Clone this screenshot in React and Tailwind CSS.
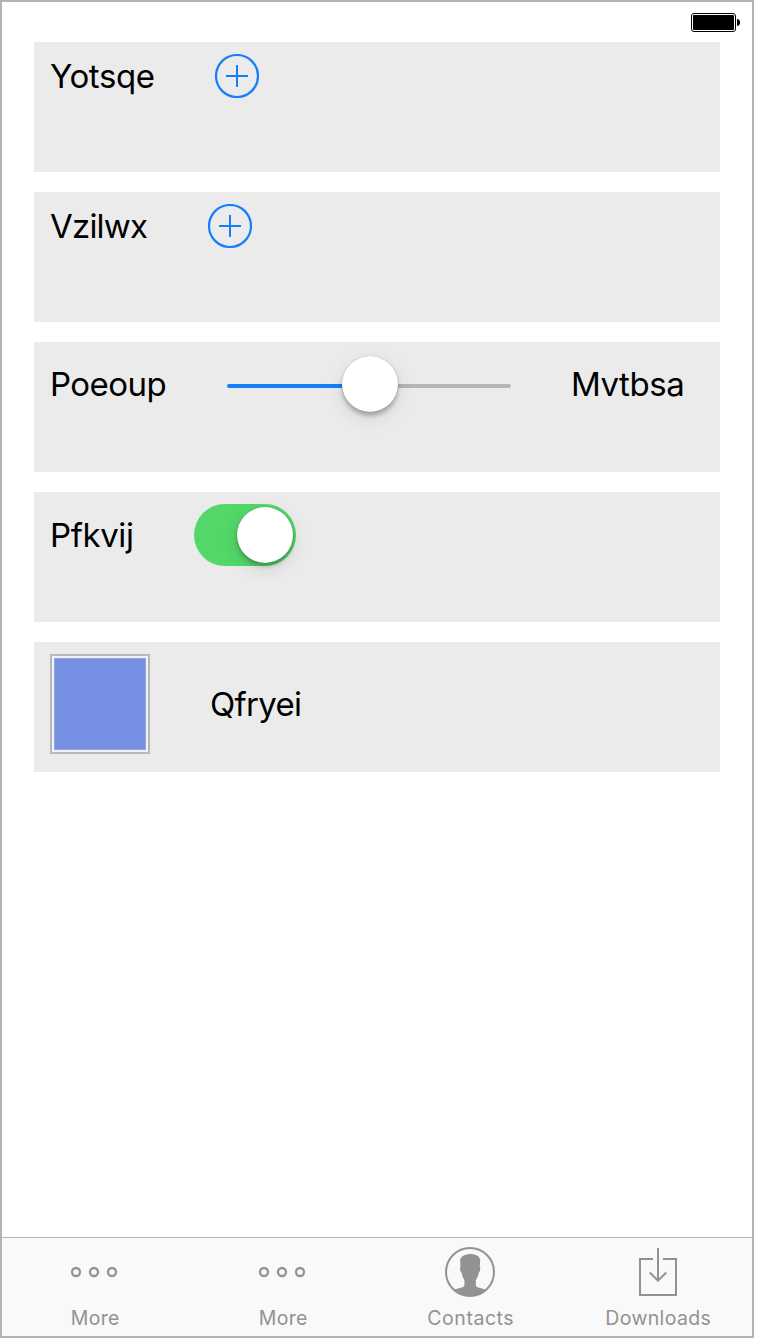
import React from "react";

function Label({ children, className = "" }) {
  return (
    <span className={"block shrink-0 whitespace-nowrap text-[33px] leading-[44px] text-black " + className}>
      {children}
    </span>
  );
}

function Card({ children, row }) {
  return (
    <section className="h-[130px] bg-[#ebebeb] pt-3 pl-4">
      <div className={"flex items-center gap-[60px] " + row}>{children}</div>
    </section>
  );
}

function AddButton() {
  return (
    <button type="button" className="block size-11 shrink-0">
      <svg width="44" height="44" viewBox="0 0 44 44" fill="none" stroke="#147efb" strokeWidth="2">
        <circle cx="22" cy="22" r="21" strokeWidth="2.2" />
        <path d="M22 11V33M11 22H33" />
      </svg>
    </button>
  );
}

function Slider() {
  return (
    <div className="flex h-[60px] w-[284px] shrink-0 items-center">
      <div className="mt-1 h-1 w-[115px] rounded-l-full bg-[#147efb]" />
      <div className="relative z-10 size-14 shrink-0 rounded-full bg-white shadow-[0_0_1px_rgba(0,0,0,0.35),0_4px_4px_rgba(0,0,0,0.25),0_6px_20px_rgba(0,0,0,0.09)]" />
      <div className="mt-1 h-1 w-[113px] rounded-r-full bg-[#b5b5b5]" />
    </div>
  );
}

function Toggle() {
  return (
    <div className="flex h-[62px] w-[102px] shrink-0 items-center justify-end rounded-full bg-[#53d769] pr-[3px]">
      <div className="size-14 rounded-full bg-white shadow-[0_0_1px_rgba(0,0,0,0.2),0_3px_4px_rgba(0,0,0,0.25),0_6px_18px_rgba(0,0,0,0.11)]" />
    </div>
  );
}

function MoreIcon() {
  return (
    <svg width="50" height="50" viewBox="0 0 50 50" fill="none" stroke="#929292" strokeWidth="2.3">
      <circle cx="6" cy="25" r="4" />
      <circle cx="24" cy="25" r="4" />
      <circle cx="42" cy="25" r="4" />
    </svg>
  );
}

function ContactsIcon() {
  return (
    <svg width="50" height="50" viewBox="0 0 50 50">
      <circle cx="25" cy="25" r="24" fill="none" stroke="#929292" strokeWidth="2" />
      <path
        fill="#929292"
        d="M25.5 7C30.5 7 35.2 9.3 35.2 13.5L34.8 19.5C35.6 20.5 35.2 24.5 33.9 25.4C33.4 28 32.2 31 30.8 33V38.5C31.4 41 36.5 40.8 41.5 42.8C37 47 31.5 49 25 49S13 47 8.5 42.8C13.5 40.8 18.8 41 19.4 38.5V33C18 31 17 28 16.5 25.4C15 24.5 14.7 20.5 15.5 19.5L15.2 13.5C15.2 9.3 20.5 7 25.5 7Z"
      />
    </svg>
  );
}

function DownloadsIcon() {
  return (
    <svg width="50" height="50" viewBox="0 0 50 50" fill="none" stroke="#929292" strokeWidth="2">
      <path d="M20 12H7V48H43V12H30M25 1V34M16.8 25.5L25 33.7L33.2 25.5" />
    </svg>
  );
}

function Tab({ icon, label, className = "", iconClass = "" }) {
  return (
    <a className="flex flex-1 flex-col items-center pt-[9px] text-[#929292]">
      <span className={"block " + iconClass}>{icon}</span>
      <span className={"mt-[9px] whitespace-nowrap text-[19.5px] leading-6 " + className}>{label}</span>
    </a>
  );
}

export default function App() {
  return (
    <div className="flex h-[1340px] w-[760px] bg-white font-['Inter','Liberation_Sans',sans-serif]">
      <div className="flex h-[1338px] w-[754px] flex-col border-2 border-[#b3b3b3] bg-white">
        <header className="flex h-10 items-center justify-end pr-[12px]">
          <svg width="49" height="19" viewBox="0 0 49 19">
            <rect x="0.5" y="0.5" width="44" height="18" rx="2.5" fill="#fff" stroke="#000" />
            <rect x="2" y="2" width="41" height="15" rx="1" />
            <path d="M46 6C48 6 49 7.5 49 9.5S48 13 46 13Z" />
          </svg>
        </header>
        <main className="flex flex-1 flex-col gap-5 px-8">
          <Card row="h-11">
            <Label className="w-[105px] tracking-[-0.4px]">Yotsqe</Label>
            <AddButton />
          </Card>
          <Card row="h-11">
            <Label className="w-[98px] tracking-[-0.8px]">Vzilwx</Label>
            <AddButton />
          </Card>
          <Card row="h-[60px]">
            <Label className="w-[117px] tracking-[-0.55px]">Poeoup</Label>
            <Slider />
            <Label className="tracking-[-0.45px]">Mvtbsa</Label>
          </Card>
          <Card row="h-[62px]">
            <Label className="w-[84px] tracking-[-0.4px]">Pfkvij</Label>
            <Toggle />
          </Card>
          <Card row="h-[100px]">
            <div className="size-[100px] shrink-0 border-2 border-[#b8b8b8] bg-[#f1f3fb] p-[2px]">
              <div className="size-full border border-[#92a6e8] bg-[#758fe2]" />
            </div>
            <Label className="tracking-[-0.7px]">Qfryei</Label>
          </Card>
        </main>
        <nav className="flex h-[99px] border-t border-[#b2b2b2] bg-[#f9f9f9]">
          <Tab icon={<MoreIcon />} iconClass="mr-px" label="More" className="tracking-[0.3px] pr-px" />
          <Tab icon={<MoreIcon />} label="More" className="tracking-[0.3px]" />
          <Tab icon={<ContactsIcon />} iconClass="mr-px" label="Contacts" className="tracking-[0.55px]" />
          <Tab icon={<DownloadsIcon />} label="Downloads" className="tracking-[0.35px]" />
        </nav>
      </div>
    </div>
  );
}
